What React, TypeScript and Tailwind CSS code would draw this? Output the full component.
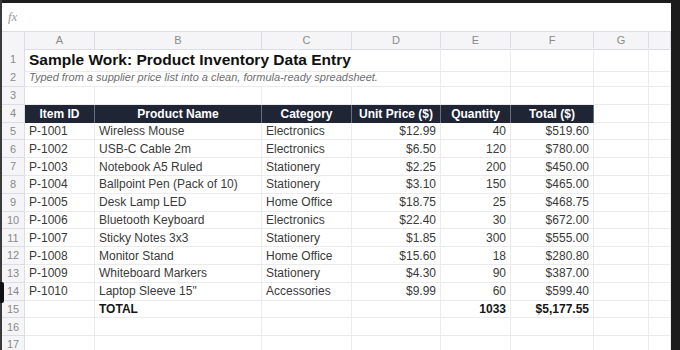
import React from "react";

const cols = ["A", "B", "C", "D", "E", "F", "G", ""];
const gridCols = "grid grid-cols-[23px_70px_167px_90px_89px_70px_83px_55px_22px]";

const data: [string, string, string, string, string, string][] = [
  ["P-1001", "Wireless Mouse", "Electronics", "$12.99", "40", "$519.60"],
  ["P-1002", "USB-C Cable 2m", "Electronics", "$6.50", "120", "$780.00"],
  ["P-1003", "Notebook A5 Ruled", "Stationery", "$2.25", "200", "$450.00"],
  ["P-1004", "Ballpoint Pen (Pack of 10)", "Stationery", "$3.10", "150", "$465.00"],
  ["P-1005", "Desk Lamp LED", "Home Office", "$18.75", "25", "$468.75"],
  ["P-1006", "Bluetooth Keyboard", "Electronics", "$22.40", "30", "$672.00"],
  ["P-1007", "Sticky Notes 3x3", "Stationery", "$1.85", "300", "$555.00"],
  ["P-1008", "Monitor Stand", "Home Office", "$15.60", "18", "$280.80"],
  ["P-1009", "Whiteboard Markers", "Stationery", "$4.30", "90", "$387.00"],
  ["P-1010", "Laptop Sleeve 15\"", "Accessories", "$9.99", "60", "$599.40"],
];

const headers = ["Item ID", "Product Name", "Category", "Unit Price ($)", "Quantity", "Total ($)"];

function RowNum({ n }: { n: number }) {
  return (
    <div className="flex items-center justify-center bg-[#f5f5f8] border-r border-b border-[#dcdce6] text-[11px] text-[#8a8a8a]">
      {n}
    </div>
  );
}

function Cell({ children, right, bold }: { children?: React.ReactNode; right?: boolean; bold?: boolean }) {
  return (
    <div
      className={
        "flex items-center overflow-hidden whitespace-nowrap border-r border-b border-[#ebebeb] px-[4px] text-[12px] " +
        (right ? "justify-end " : "justify-start ") +
        (bold ? "font-bold text-[#151515]" : "text-[#3a3a3a]")
      }
    >
      {children}
    </div>
  );
}

export default function App() {
  return (
    <div className="relative flex h-[350px] w-[680px] overflow-hidden bg-[#1c1c1c] font-['Liberation_Sans',Arial,sans-serif]">
      <div className="w-[2px] shrink-0 bg-[#3a3a3a]" />
      <div className="mt-[3px] flex w-[669px] shrink-0 flex-col bg-white">
        <div className="flex h-[29px] shrink-0 items-center border-b border-[#dcdce6] pl-[6px]">
          <span className="font-['Liberation_Serif',serif] text-[13px] italic text-[#9a9a9a]">fx</span>
        </div>
        <div className={gridCols + " h-[16px] shrink-0"}>
          <div className="bg-[#f5f5f8] border-r border-b border-[#dcdce6]" />
          {cols.map((c, i) => (
            <div
              key={i}
              className="flex items-center justify-center bg-[#f5f5f8] border-r border-b border-[#dcdce6] text-[11px] text-[#8a8a8a]"
            >
              {c}
            </div>
          ))}
        </div>
        <div className={gridCols + " h-[20px] shrink-0"}>
          <RowNum n={1} />
          <div className="col-span-4 flex items-center whitespace-nowrap border-r border-b border-[#ebebeb] px-[4px] text-[15.5px] font-bold text-[#111]">
            Sample Work: Product Inventory Data Entry
          </div>
          <Cell />
          <Cell />
          <Cell />
          <Cell />
        </div>
        <div className={gridCols + " h-[18.5px] shrink-0"}>
          <RowNum n={2} />
          <div className="col-span-4 flex items-center whitespace-nowrap border-r border-b border-[#ebebeb] px-[4px] text-[11px] italic text-[#6e6e6e]">
            Typed from a supplier price list into a clean, formula-ready spreadsheet.
          </div>
          <Cell />
          <Cell />
          <Cell />
          <Cell />
        </div>
        <div className={gridCols + " h-[18.5px] shrink-0"}>
          <RowNum n={3} />
          {cols.map((_, i) => (
            <Cell key={i} />
          ))}
        </div>
        <div className={gridCols + " h-[17.7px] shrink-0"}>
          <RowNum n={4} />
          {headers.map((h, i) => (
            <div
              key={i}
              className="flex items-center justify-center whitespace-nowrap bg-[#1f2535] border-r border-[#6a7080] text-[12px] font-bold text-white"
            >
              {h}
            </div>
          ))}
          <Cell />
          <Cell />
        </div>
        {data.map((r, idx) => (
          <div key={idx} className={gridCols + " h-[17.8px] shrink-0"}>
            <RowNum n={idx + 5} />
            <Cell>{r[0]}</Cell>
            <Cell>{r[1]}</Cell>
            <Cell>{r[2]}</Cell>
            <Cell right>{r[3]}</Cell>
            <Cell right>{r[4]}</Cell>
            <Cell right>{r[5]}</Cell>
            <Cell />
            <Cell />
          </div>
        ))}
        <div className={gridCols + " h-[17.8px] shrink-0"}>
          <RowNum n={15} />
          <Cell />
          <Cell bold>TOTAL</Cell>
          <Cell />
          <Cell />
          <Cell right bold>1033</Cell>
          <Cell right bold>$5,177.55</Cell>
          <Cell />
          <Cell />
        </div>
        {[16, 17, 18].map((n) => (
          <div key={n} className={gridCols + " h-[17.8px] shrink-0"}>
            <RowNum n={n} />
            {cols.map((_, i) => (
              <Cell key={i} />
            ))}
          </div>
        ))}
      </div>
      <div className="absolute left-0 top-[282px] h-[21px] w-[4px] rounded-r-[2px] bg-[#111]" />
    </div>
  );
}
